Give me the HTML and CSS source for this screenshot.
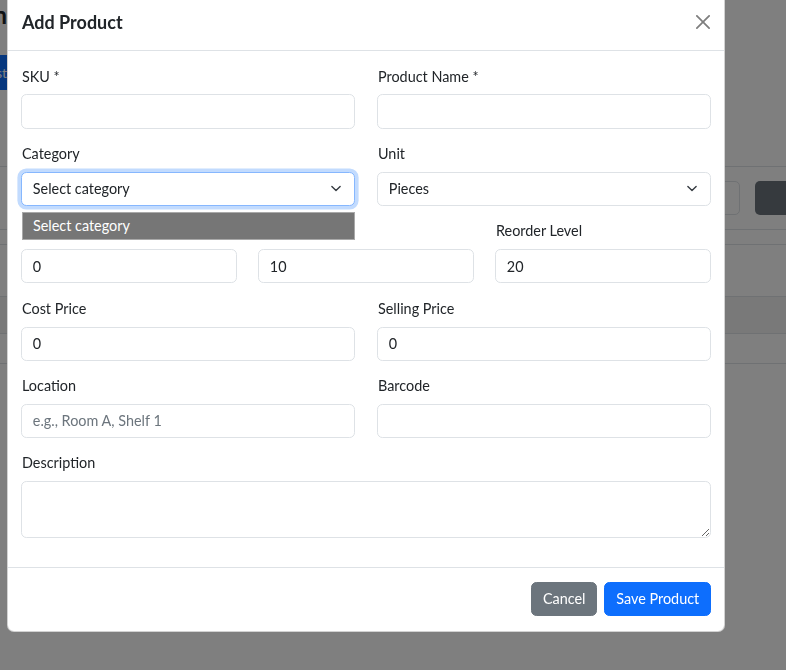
FILE: index.html
```html
<!DOCTYPE html>
<html lang="en">
<head>
<meta charset="utf-8">
<title>Add Product</title>
<link rel="stylesheet" href="styles.css">
</head>
<body>
<div class="page">
  <div class="head-row">
    <div class="clip"><span class="page-title">Inventory Admin</span></div>
  </div>
  <div class="btn-row">
    <div class="clip btn-clip"><span>Li st</span></div>
  </div>
  <div class="card">
    <div class="toolbar">
      <div class="tb-input"></div>
      <div class="tb-btn"></div>
    </div>
    <div class="card-gap"></div>
    <div class="card-sub"></div>
    <div class="thead"></div>
    <div class="trow"></div>
  </div>
</div>

<div class="backdrop"></div>

<div class="modal">
  <div class="modal-header">
    <h5 class="modal-title">Add Product</h5>
    <button class="btn-close" type="button" aria-label="Close">
      <svg viewBox="0 0 16 16" width="14" height="14"><path d="M.293.293a1 1 0 0 1 1.414 0L8 6.586 14.293.293a1 1 0 1 1 1.414 1.414L9.414 8l6.293 6.293a1 1 0 0 1-1.414 1.414L8 9.414l-6.293 6.293a1 1 0 0 1-1.414-1.414L6.586 8 .293 1.707a1 1 0 0 1 0-1.414"/></svg>
    </button>
  </div>
  <div class="modal-body">
    <div class="grid2">
      <div class="field"><label>SKU *</label><input class="fc" type="text"></div>
      <div class="field"><label>Product Name *</label><input class="fc" type="text"></div>
    </div>
    <div class="grid2">
      <div class="field">
        <label>Category</label>
        <div class="fc select focus"><span>Select category</span>
          <svg viewBox="0 0 16 16" width="14" height="11"><path d="m2 5 6 6 6-6" fill="none" stroke="#343a40" stroke-width="2" stroke-linecap="round" stroke-linejoin="round"/></svg>
        </div>
        <div class="popup"><div class="popup-opt">Select category</div></div>
      </div>
      <div class="field">
        <label>Unit</label>
        <div class="fc select"><span>Pieces</span>
          <svg viewBox="0 0 16 16" width="14" height="11"><path d="m2 5 6 6 6-6" fill="none" stroke="#343a40" stroke-width="2" stroke-linecap="round" stroke-linejoin="round"/></svg>
        </div>
      </div>
    </div>
    <div class="grid3">
      <div class="field"><label>Current Stock</label><input class="fc" type="text" value="0"></div>
      <div class="field"><label>Min Stock</label><input class="fc" type="text" value="10"></div>
      <div class="field"><label>Reorder Level</label><input class="fc" type="text" value="20"></div>
    </div>
    <div class="grid2">
      <div class="field"><label>Cost Price</label><input class="fc" type="text" value="0"></div>
      <div class="field"><label>Selling Price</label><input class="fc" type="text" value="0"></div>
    </div>
    <div class="grid2">
      <div class="field"><label>Location</label><input class="fc" type="text" placeholder="e.g., Room A, Shelf 1"></div>
      <div class="field"><label>Barcode</label><input class="fc" type="text"></div>
    </div>
    <div class="field">
      <label>Description</label>
      <textarea class="fc ta" rows="2"></textarea>
    </div>
  </div>
  <div class="modal-footer">
    <button class="btn btn-secondary" type="button">Cancel</button>
    <button class="btn btn-primary" type="button">Save Product</button>
  </div>
</div>
</body>
</html>
```
FILE: styles.css
```css
* { box-sizing: border-box; }
html, body { margin: 0; padding: 0; }
body {
  width: 786px;
  height: 670px;
  overflow: hidden;
  background: #fff;
  font-family: Lato, "Noto Sans", sans-serif;
  font-size: 14.4px;
  line-height: 1.5;
  color: #212529;
}

/* ---------- background page ---------- */
.page { width: 786px; overflow: hidden; }
.head-row { height: 30px; display: flex; align-items: center; }
.clip {
  width: 7px;
  overflow: hidden;
  display: flex;
  justify-content: flex-end;
  white-space: nowrap;
}
.page-title { font-size: 24px; font-weight: 700; color: #212529; }
.btn-row { margin-top: 25px; height: 35px; }
.btn-clip {
  height: 35px;
  align-items: center;
  background: #0d6efd;
  color: #fff;
  font-size: 14px;
}
.card { margin-top: 76px; border-top: 1px solid #dee2e6; }
.toolbar {
  height: 63px;
  display: flex;
  align-items: center;
  gap: 15px;
  padding-left: 600px;
  border-bottom: 1px solid #dee2e6;
}
.tb-input {
  flex: 1;
  height: 34px;
  border: 1px solid #dee2e6;
  border-radius: 5px;
}
.tb-btn {
  width: 90px;
  flex: none;
  height: 34px;
  background: #6c757d;
  border-radius: 5px;
  margin-right: -59px;
}
.card-gap { height: 15px; border-bottom: 1px solid #dee2e6; }
.card-sub { height: 52px; border-bottom: 1px solid #dee2e6; }
.thead { height: 37px; background: #f3f3f3; border-bottom: 1px solid #dee2e6; }
.trow { height: 30px; border-bottom: 1px solid #dee2e6; }

.backdrop {
  position: fixed;
  inset: 0;
  background: rgba(0, 0, 0, 0.5);
}

/* ---------- modal ---------- */
.modal {
  position: absolute;
  left: 7px;
  top: -6.5px;
  width: 718px;
  background: #fff;
  border: 1px solid rgba(0, 0, 0, 0.175);
  border-radius: 7px;
}
.modal-header {
  display: flex;
  align-items: center;
  justify-content: space-between;
  padding: 14.4px 13px;
  border-bottom: 1px solid #dee2e6;
}
.modal-title {
  margin: 0;
  font-size: 18px;
  font-weight: 700;
  line-height: 27px;
  padding-left: 1px;
}
.btn-close {
  border: 0;
  background: transparent;
  padding: 0;
  margin-right: 1px;
  width: 14px;
  height: 14px;
  display: flex;
  opacity: 0.5;
}
.btn-close svg { fill: #000; }

.modal-body { padding: 14.4px 13px; }
.grid2 {
  display: grid;
  grid-template-columns: 1fr 1fr;
  column-gap: 22px;
}
.grid3 {
  display: grid;
  grid-template-columns: 1fr 1fr 1fr;
  column-gap: 21px;
}
.field { margin-bottom: 14.4px; position: relative; }
.field label {
  display: block;
  margin-bottom: 7.2px;
  line-height: 21.6px;
  padding-left: 1px;
}
.fc {
  display: block;
  width: 100%;
  height: 34.2px;
  margin: 0;
  padding: 5.4px 10.8px;
  font: inherit;
  line-height: 21.6px;
  color: #212529;
  background: #fff;
  border: 1px solid #dee2e6;
  border-radius: 5.4px;
  outline: none;
}
.fc::placeholder { color: #6c757d; opacity: 1; }
.select {
  display: flex;
  align-items: center;
  justify-content: space-between;
}
.select svg { flex: none; }
.focus {
  border-color: #86b7fe;
  box-shadow: 0 0 0 3.6px rgba(13, 110, 253, 0.25);
}
.ta { height: 56.5px; resize: vertical; }

.popup {
  position: absolute;
  left: 1px;
  right: 0;
  top: calc(100% + 5.5px);
  height: 28px;
  background: #fff;
  border: 1px solid #a9a9a9;
  z-index: 2;
}
.popup-opt {
  height: 100%;
  background: #767676;
  color: #fff;
  padding-left: 10px;
  line-height: 26px;
}

.modal-footer {
  display: flex;
  justify-content: flex-end;
  align-items: center;
  padding: 10.8px 9.4px;
  border-top: 1px solid #dee2e6;
}
.btn {
  margin: 3.6px;
  height: 34.2px;
  padding: 5.4px 10.8px;
  font: inherit;
  line-height: 21.6px;
  border: 1px solid transparent;
  border-radius: 5.4px;
  color: #fff;
}
.btn-secondary { background: #6c757d; border-color: #6c757d; }
.btn-primary { background: #0d6efd; border-color: #0d6efd; }
```
